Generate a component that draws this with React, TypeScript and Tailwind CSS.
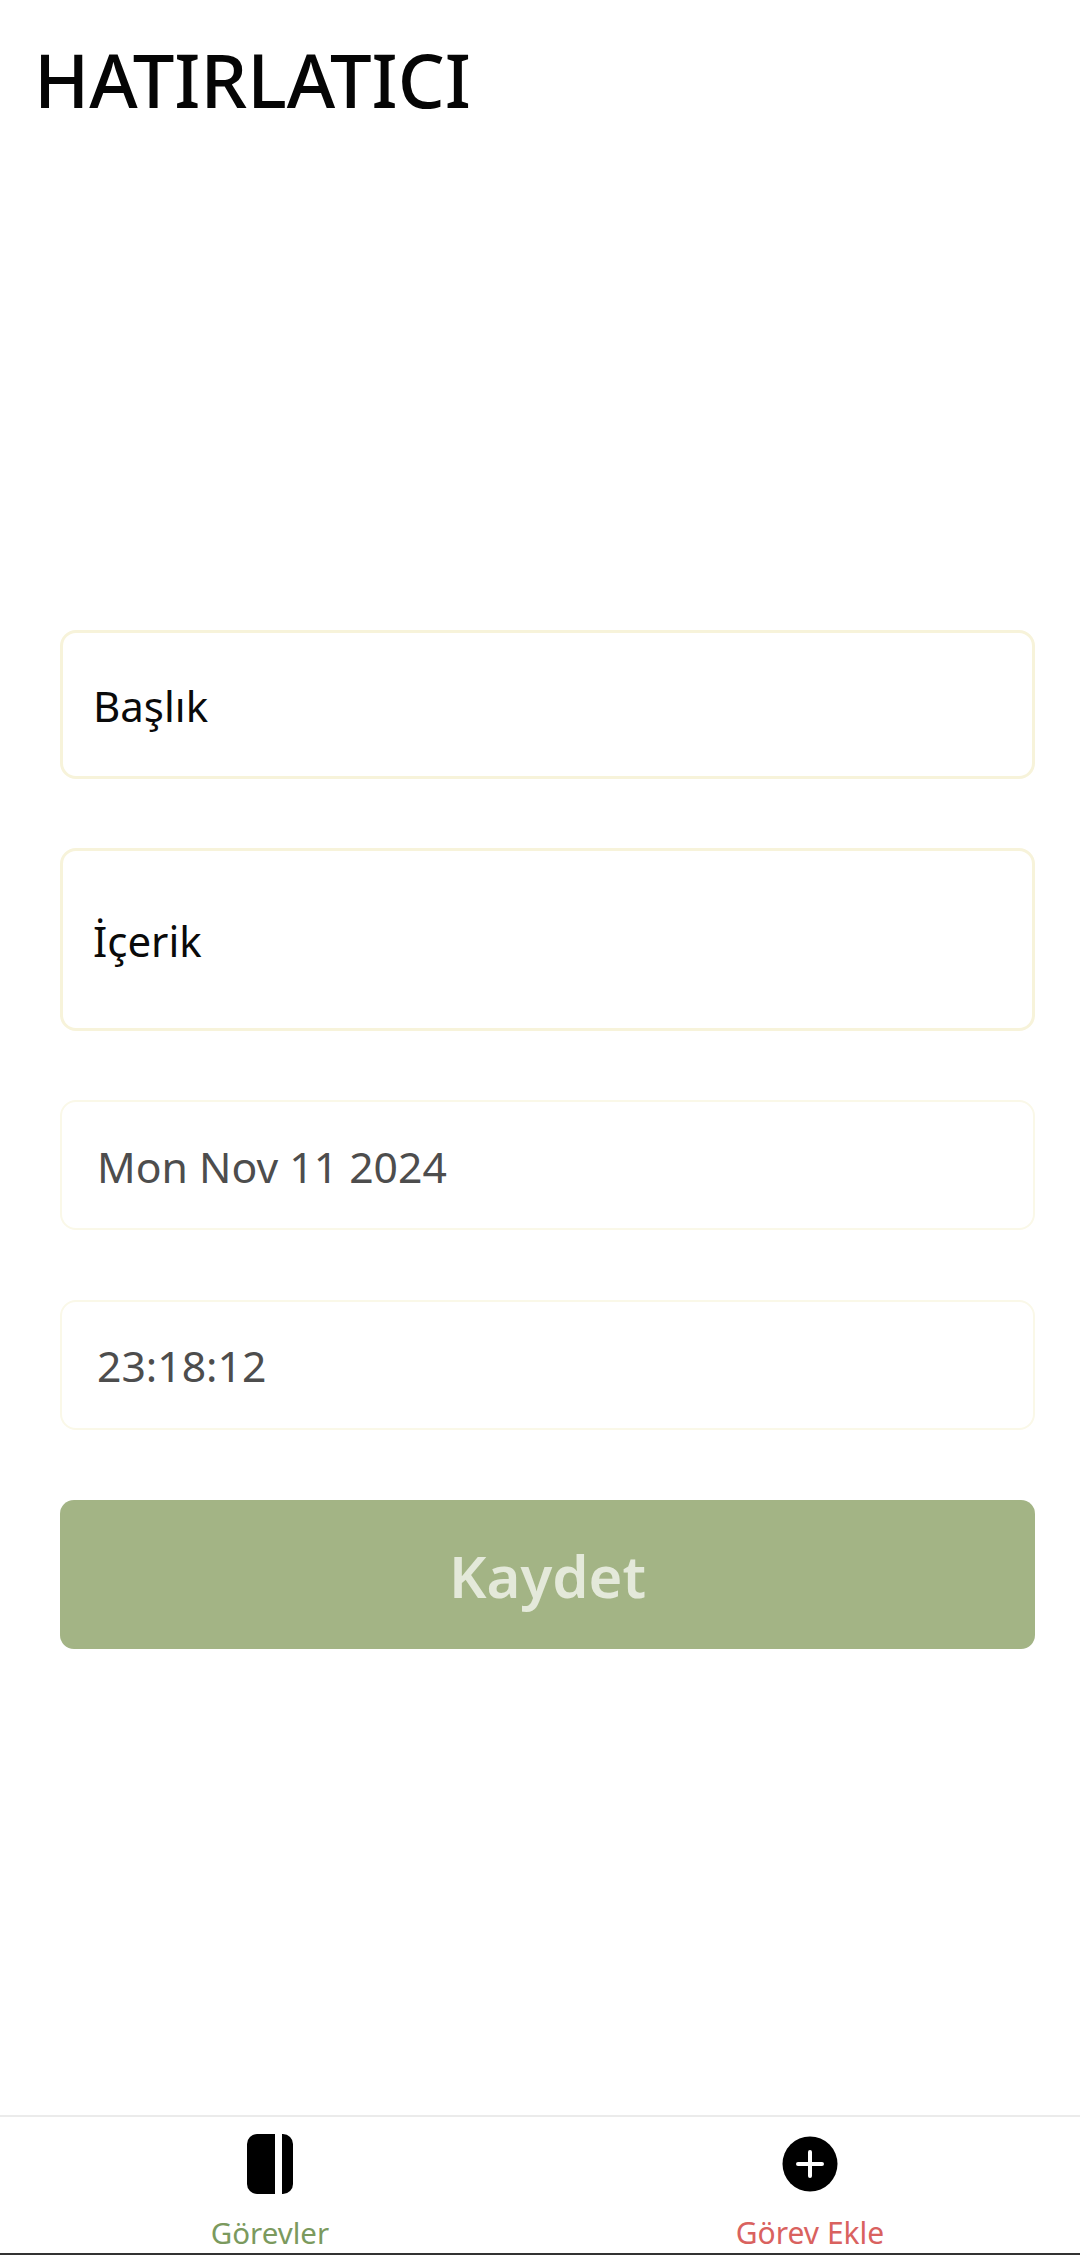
export default function App() {
  const font = "font-['Noto_Sans','Open_Sans',sans-serif]";
  return (
    <div className={`flex h-[2255px] w-[1080px] flex-col bg-white ${font}`}>
      <header className="h-[630px] pl-[34px] pt-[30px]">
        <h1 className="text-[74px] leading-[100px] font-medium text-[#050505]">HATIRLATICI</h1>
      </header>
      <main className="flex flex-1 flex-col px-[60px]">
        <div className="flex h-[149px] w-[975px] items-center rounded-[16px] border-[3px] border-[#f7f3da] pl-[30px] pt-[1px] text-[42px] text-[#0a0a0a]">Başlık</div>
        <div className="mt-[69px] flex h-[183px] w-[975px] items-center rounded-[16px] border-[3px] border-[#f7f3da] pl-[30px] pt-[2px] text-[42px] text-[#0a0a0a]">İçerik</div>
        <div className="mt-[69px] flex h-[130px] w-[975px] items-center rounded-[16px] border-2 border-[#faf8e8] pl-[35px] pt-[4px] text-[42.7px] text-[#4d4d4d]">Mon Nov 11 2024</div>
        <div className="mt-[70px] flex h-[130px] w-[975px] items-center rounded-[16px] border-2 border-[#faf8e8] pl-[35px] pt-[2px] text-[42.7px] text-[#4d4d4d]">23:18:12</div>
        <button className="mt-[70px] flex h-[149px] w-[975px] items-center justify-center rounded-[14px] bg-[#a3b485] pt-[1px] text-[58px] font-semibold text-[#e4e9da]">Kaydet</button>
      </main>
      <nav className="grid h-[140px] grid-cols-2 border-t-2 border-[#ebebeb] border-b-2 border-b-[#333333]">
        <div className="flex flex-col items-center pt-[17px]">
          <svg width="46" height="60" viewBox="0 0 46 60" aria-hidden="true">
            <path d="M10 0H28V60H10A10 10 0 0 1 0 50V10A10 10 0 0 1 10 0Z" fill="#000" />
            <path d="M35 0H36A10 10 0 0 1 46 10V50A10 10 0 0 1 36 60H35Z" fill="#000" />
          </svg>
          <span className="mt-[19px] text-[29.5px] leading-[40px] text-[#7b9a5e]">Görevler</span>
        </div>
        <div className="flex flex-col items-center pt-[19px]">
          <svg width="56" height="56" viewBox="0 0 56 56" aria-hidden="true">
            <circle cx="28" cy="28" r="27.5" fill="#000" />
            <path d="M28 16V40M16 28H40" stroke="#fff" strokeWidth="4" strokeLinecap="round" />
          </svg>
          <span className="mt-[21px] text-[30px] leading-[40px] text-[#d9625f]">Görev Ekle</span>
        </div>
      </nav>
    </div>
  );
}
